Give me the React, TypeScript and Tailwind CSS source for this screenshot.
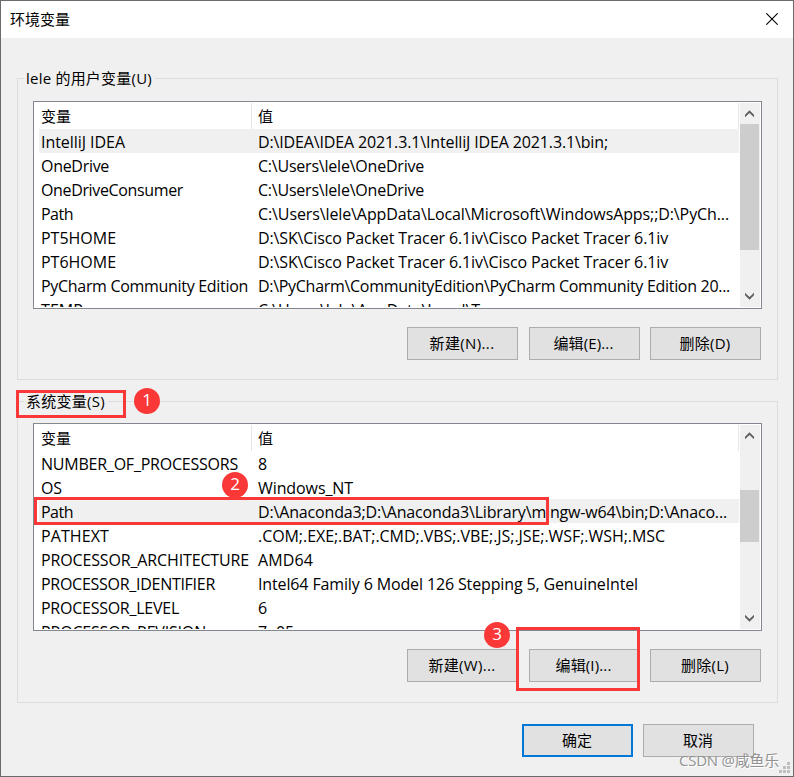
import { useLayoutEffect, useRef, useState } from "react";
import type { ReactNode } from "react";

/** Text tracked so that it fills the given number of pixels. */
function Fit({ w, children }: { w: number; children: string }) {
  const ref = useRef<HTMLSpanElement>(null);
  const [tracking, setTracking] = useState(0);
  useLayoutEffect(() => {
    if (ref.current) {
      const natural = ref.current.getBoundingClientRect().width;
      setTracking((w - natural) / children.length);
    }
  }, []);
  return (
    <span ref={ref} className="inline-block whitespace-pre" style={{ letterSpacing: tracking }}>
      {children}
    </span>
  );
}

type Row = { name: string; nw: number; value: string; vw: number; selected?: boolean };

const userRows: Row[] = [
  { name: "IntelliJ IDEA", nw: 84, value: "D:\\IDEA\\IDEA 2021.3.1\\IntelliJ IDEA 2021.3.1\\bin;", vw: 350, selected: true },
  { name: "OneDrive", nw: 68, value: "C:\\Users\\lele\\OneDrive", vw: 166 },
  { name: "OneDriveConsumer", nw: 142, value: "C:\\Users\\lele\\OneDrive", vw: 166 },
  { name: "Path", nw: 32, value: "C:\\Users\\lele\\AppData\\Local\\Microsoft\\WindowsApps;;D:\\PyCh...", vw: 471 },
  { name: "PT5HOME", nw: 75, value: "D:\\SK\\Cisco Packet Tracer 6.1iv\\Cisco Packet Tracer 6.1iv", vw: 410 },
  { name: "PT6HOME", nw: 75, value: "D:\\SK\\Cisco Packet Tracer 6.1iv\\Cisco Packet Tracer 6.1iv", vw: 410 },
  { name: "PyCharm Community Edition", nw: 207, value: "D:\\PyCharm\\CommunityEdition\\PyCharm Community Edition 20...", vw: 472 },
  { name: "TEMP", nw: 42, value: "C:\\Users\\lele\\AppData\\Local\\T", vw: 222 },
];

const systemRows: Row[] = [
  { name: "NUMBER_OF_PROCESSORS", nw: 197, value: "8", vw: 9 },
  { name: "OS", nw: 21, value: "Windows_NT", vw: 95 },
  { name: "Path", nw: 32, value: "D:\\Anaconda3;D:\\Anaconda3\\Library\\mingw-w64\\bin;D:\\Anaco...", vw: 469, selected: true },
  { name: "PATHEXT", nw: 68, value: ".COM;.EXE;.BAT;.CMD;.VBS;.VBE;.JS;.JSE;.WSF;.WSH;.MSC", vw: 407 },
  { name: "PROCESSOR_ARCHITECTURE", nw: 208, value: "AMD64", vw: 55 },
  { name: "PROCESSOR_IDENTIFIER", nw: 174, value: "Intel64 Family 6 Model 126 Stepping 5, GenuineIntel", vw: 380 },
  { name: "PROCESSOR_LEVEL", nw: 138, value: "6", vw: 9 },
  { name: "PROCESSOR_REVISION", nw: 165, value: "7e05", vw: 36 },
];

function Arrow({ down }: { down?: boolean }) {
  return (
    <svg width="20" height="21" viewBox="0 0 20 21" className={down ? "-scale-y-100" : ""} aria-hidden="true">
      <path d="M5 11.7 9.5 7.2 14 11.7V14.2L9.5 9.9 5 14.2Z" fill="#606060" />
    </svg>
  );
}

function VariableList({ rows, thumb }: { rows: Row[]; thumb: string }) {
  return (
    <div className="flex h-[208px] w-[729px] border border-[#828790] bg-white py-px pr-px pl-[5px]">
      <div className="h-[204px] w-[700px] overflow-hidden">
        <div className="flex h-[26px] items-center">
          <div className="flex h-full w-[213px] items-center border-r border-[#e5e5e5] pl-0.5">
            <Fit w={30}>变量</Fit>
          </div>
          <div className="flex h-full w-[487px] items-center border-r border-[#e5e5e5] pl-1.5">
            <Fit w={15}>值</Fit>
          </div>
        </div>
        {rows.map((r) => (
          <div key={r.name} className={`flex h-6 items-center pt-0.5 text-[16px] leading-6 ${r.selected ? "bg-[#f0f0f0]" : ""}`}>
            <div className="w-[219px] shrink-0 pl-0.5">
              <Fit w={r.nw}>{r.name}</Fit>
            </div>
            <div className="shrink-0">
              <Fit w={r.vw}>{r.value}</Fit>
            </div>
          </div>
        ))}
      </div>
      <div className="ml-px flex w-5 shrink-0 flex-col bg-[#f0f0f0]">
        <Arrow />
        <div className="flex-1">
          <div className={`w-[19px] bg-[#cdcdcd] ${thumb}`} />
        </div>
        <Arrow down />
      </div>
    </div>
  );
}

function Button({ label, w, primary }: { label: string; w: number; primary?: boolean }) {
  return (
    <button
      className={`flex h-[33px] w-[111px] items-center justify-center bg-[#e1e1e1] pr-px pb-0.5 ${
        primary ? "border-2 border-[#0078d7]" : "border border-[#adadad]"
      }`}
    >
      <Fit w={w}>{label}</Fit>
    </button>
  );
}

function Group({ title, titleWidth, gap, children }: { title: string; titleWidth: number; gap: string; children: ReactNode }) {
  return (
    <section className="h-[302px] w-[761px] border border-[#dcdcdc] pl-[15px]">
      <h2 className="-mt-[13px] -ml-[9px] flex h-6 w-fit items-center bg-[#f0f0f0] pr-[3px] pl-0.5">
        <Fit w={titleWidth}>{title}</Fit>
      </h2>
      <div className={gap}>{children}</div>
    </section>
  );
}

function Badge({ n, place }: { n: string; place: string }) {
  return (
    <div className={`absolute flex size-[26px] items-center justify-center rounded-full bg-[#fb3838] pb-0.5 text-[17px] text-white ${place}`}>
      {n}
    </div>
  );
}

export default function App() {
  return (
    <div className="relative h-[777px] w-[794px] overflow-hidden border border-[#6b6b6b] bg-[#f0f0f0] font-['Open_Sans','Noto_Sans_CJK_SC',sans-serif] text-[15px] leading-6 text-black">
      <header className="flex h-[37px] items-center justify-between bg-white pr-[15px] pb-px pl-[9px]">
        <div className="pb-px">
          <Fit w={60}>环境变量</Fit>
        </div>
        <svg width="12" height="12" viewBox="0 0 12 12" aria-hidden="true">
          <path d="M.3.3l11.4 11.4M11.7.3.3 11.7" stroke="#000" strokeWidth="1.1" />
        </svg>
      </header>
      <main className="flex flex-col pt-10 pl-4">
        <Group title="lele 的用户变量(U)" titleWidth={126} gap="mt-[11px]">
          <VariableList rows={userRows} thumb="h-[126px]" />
          <div className="mt-[18px] flex w-[728px] justify-end gap-[10.5px]">
            <Button label="新建(N)..." w={65} />
            <Button label="编辑(E)..." w={60} />
            <Button label="删除(D)" w={51} />
          </div>
        </Group>
        <div className="h-[21px]" />
        <Group title="系统变量(S)" titleWidth={79} gap="mt-2.5">
          <VariableList rows={systemRows} thumb="mt-[44px] h-[52px]" />
          <div className="mt-[18px] flex w-[728px] justify-end gap-[10.5px]">
            <Button label="新建(W)..." w={67} />
            <Button label="编辑(I)..." w={56} />
            <Button label="删除(L)" w={48} />
          </div>
        </Group>
        <div className="mt-[21px] flex w-[737px] justify-end gap-2.5">
          <Button label="确定" w={30} primary />
          <Button label="取消" w={30} />
        </div>
      </main>

      {/* Numbered step markers over the dialog */}
      <div className="absolute top-[389px] left-[15px] h-[28px] w-[110px] border-3 border-[#fb3838]" />
      <div className="absolute top-[496px] left-[33px] h-[28px] w-[515px] border-3 border-[#fb3838]" />
      <div className="absolute top-[626px] left-[515px] h-[64px] w-[124px] border-3 border-[#fb3838]" />
      <Badge n="1" place="top-[387px] left-[133px]" />
      <Badge n="2" place="top-[471px] left-[221px]" />
      <Badge n="3" place="top-[621px] left-[483px]" />

      <svg className="absolute right-[3px] bottom-[3px]" width="11" height="11" viewBox="0 0 11 11" fill="#bfbfbf" aria-hidden="true">
        <path d="M8 0h3v3H8zM4 4h3v3H4zM8 4h3v3H8zM0 8h3v3H0zM4 8h3v3H4zM8 8h3v3H8z" />
      </svg>
      <div className="absolute top-[747px] left-[678px] text-[15px] text-[#929292] [text-shadow:1px_1px_0_#fff]">
        <Fit w={100}>CSDN @咸鱼乐</Fit>
      </div>
      <div className="absolute top-[15px] -right-px h-[45px] w-px bg-[#8a3b32]" />
    </div>
  );
}
